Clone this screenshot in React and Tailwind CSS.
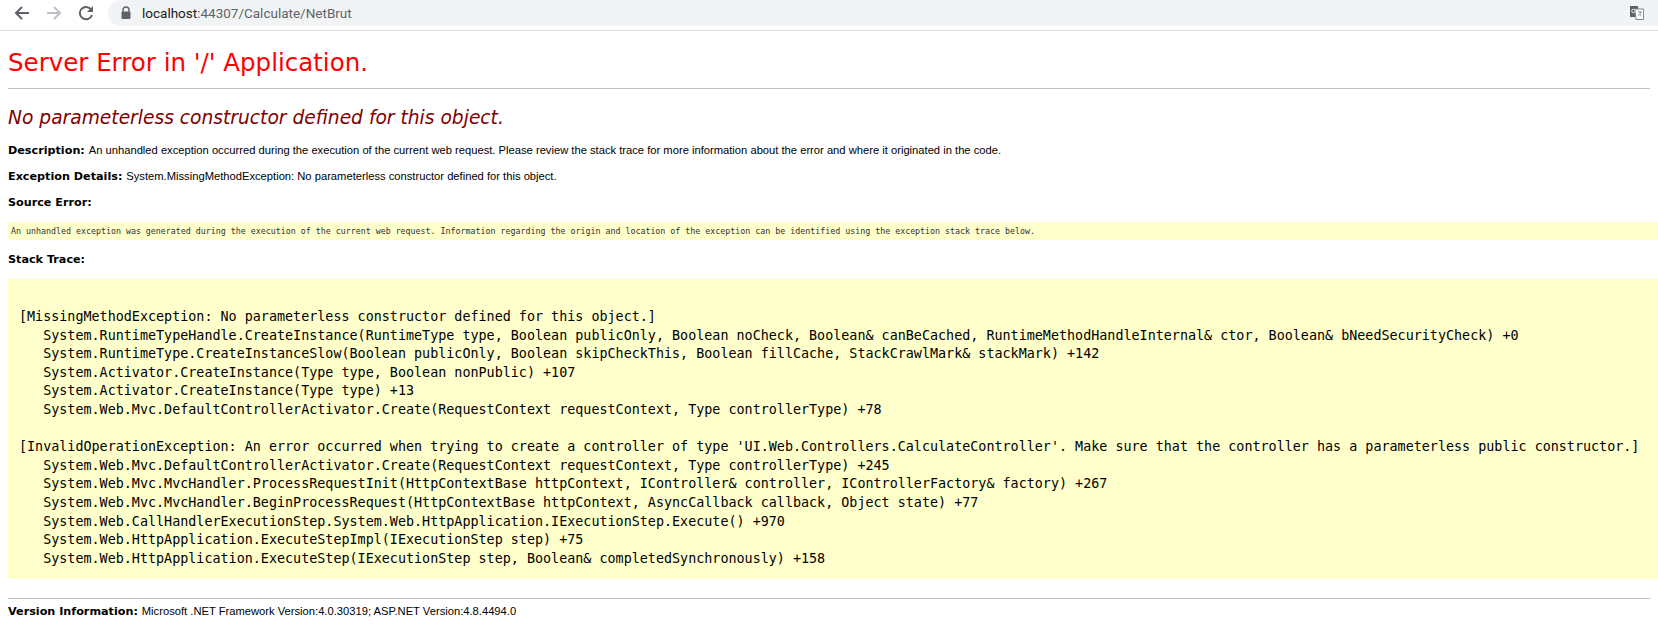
import React from "react";

const verdana = "font-['DejaVu_Sans',Verdana,sans-serif]";
const arial = "font-['Liberation_Sans',Arial,sans-serif]";

const stack = `[MissingMethodException: No parameterless constructor defined for this object.]
   System.RuntimeTypeHandle.CreateInstance(RuntimeType type, Boolean publicOnly, Boolean noCheck, Boolean& canBeCached, RuntimeMethodHandleInternal& ctor, Boolean& bNeedSecurityCheck) +0
   System.RuntimeType.CreateInstanceSlow(Boolean publicOnly, Boolean skipCheckThis, Boolean fillCache, StackCrawlMark& stackMark) +142
   System.Activator.CreateInstance(Type type, Boolean nonPublic) +107
   System.Activator.CreateInstance(Type type) +13
   System.Web.Mvc.DefaultControllerActivator.Create(RequestContext requestContext, Type controllerType) +78

[InvalidOperationException: An error occurred when trying to create a controller of type 'UI.Web.Controllers.CalculateController'. Make sure that the controller has a parameterless public constructor.]
   System.Web.Mvc.DefaultControllerActivator.Create(RequestContext requestContext, Type controllerType) +245
   System.Web.Mvc.MvcHandler.ProcessRequestInit(HttpContextBase httpContext, IController& controller, IControllerFactory& factory) +267
   System.Web.Mvc.MvcHandler.BeginProcessRequest(HttpContextBase httpContext, AsyncCallback callback, Object state) +77
   System.Web.CallHandlerExecutionStep.System.Web.HttpApplication.IExecutionStep.Execute() +970
   System.Web.HttpApplication.ExecuteStepImpl(IExecutionStep step) +75
   System.Web.HttpApplication.ExecuteStep(IExecutionStep step, Boolean& completedSynchronously) +158`;

const Label = ({ children }) => (
  <b className={`${verdana} font-bold text-[11.2px]`}>{children}</b>
);

const Toolbar = () => (
  <div className="h-[31px] flex items-start border-b border-[#dadce0] bg-white">
    <div className="flex items-center h-[26px] pl-[14px] gap-[16px] shrink-0">
      <svg width="16" height="16" viewBox="0 0 16 16" fill="none" stroke="#5f6368" strokeWidth="2">
        <path d="M15 8H2M8 2L2 8l6 6" />
      </svg>
      <svg width="16" height="16" viewBox="0 0 16 16" fill="none" stroke="#bdc1c6" strokeWidth="2">
        <path d="M1 8h13M8 2l6 6-6 6" />
      </svg>
      <svg width="16" height="16" viewBox="0 0 16 16" fill="none">
        <path d="M13.2 4.6A6.2 6.2 0 1 0 14 10" stroke="#5f6368" strokeWidth="2" />
        <path d="M15 1v6H9z" fill="#5f6368" />
      </svg>
    </div>
    <div className="flex-1 h-[26px] ml-[14px] bg-[#f1f3f4] rounded-l-[13px] flex items-center pl-[12px] pr-[14px]">
      <svg width="12" height="14" viewBox="0 0 12 14" className="shrink-0">
        <path d="M3 6V4a3 3 0 0 1 6 0v2" fill="none" stroke="#5f6368" strokeWidth="1.4" />
        <rect x="1.5" y="5.5" width="9" height="7.5" rx="1" fill="#5f6368" />
      </svg>
      <span className="font-['Roboto',sans-serif] ml-[10px] text-[13.5px] text-[#5f6368]">
        <span className="text-[#202124]">localhost</span>:44307/Calculate/NetBrut
      </span>
      <svg width="14" height="14" viewBox="0 0 14 14" className="ml-auto shrink-0">
        <path d="M0 0h8l1 11H0z" fill="#5f6368" />
        <path d="M5 3h8.500v10.500H6z" fill="#fff" stroke="#80868b" />
        <path d="M8 6h4M10 5v1M11 6c-.5 2-1.500 3-3 4M9 7.500c.5 1 1.200 1.800 2.500 2.500" stroke="#80868b" strokeWidth=".8" fill="none" />
        <circle cx="3.500" cy="5" r="1.800" fill="none" stroke="#e8eaed" />
      </svg>
    </div>
  </div>
);

export default function App() {
  return (
    <div className="bg-white text-black min-h-[633px]">
      <Toolbar />
      <div className="px-[8px]">
        <h1 className={`${verdana} text-[24.5px] leading-[28px] font-normal text-[#ff0000] pt-[18px]`}>
          Server Error in '/' Application.
        </h1>
        <hr className="border-0 border-t border-[#c0c0c0] mt-[11px]" />
        <h2 className={`${verdana} italic text-[18.67px] leading-[22px] font-normal text-[#800000] mt-[18px]`}>
          No parameterless constructor defined for this object.
        </h2>
        <p className={`${arial} text-[11.2px] leading-[13px] mt-[15px]`}>
          <Label>Description: </Label>
          An unhandled exception occurred during the execution of the current web request. Please review the stack trace for more information about the error and where it originated in the code.
        </p>
        <p className={`${arial} text-[11.2px] leading-[13px] mt-[13px]`}>
          <Label>Exception Details: </Label>
          System.MissingMethodException: No parameterless constructor defined for this object.
        </p>
        <p className={`${arial} text-[11.2px] leading-[13px] mt-[13px]`}>
          <Label>Source Error:</Label>
        </p>
        <div className="bg-[#ffffcc] mt-[13px] h-[18px] flex items-center pl-[3px] -mr-[8px]">
          <code className="font-['DejaVu_Sans_Mono',monospace] text-[8.3px] text-[#333]">
            An unhandled exception was generated during the execution of the current web request. Information regarding the origin and location of the exception can be identified using the exception stack trace below.
          </code>
        </div>
        <p className={`${arial} text-[11.2px] leading-[13px] mt-[13px]`}>
          <Label>Stack Trace:</Label>
        </p>
        <pre className="bg-[#ffffcc] mt-[13px] -mr-[8px] h-[300px] pl-[11px] pt-[29px] font-['DejaVu_Sans_Mono',monospace] text-[13.4px] leading-[18.6px] text-black">
          {stack}
        </pre>
        <hr className="border-0 border-t border-[#c0c0c0] mt-[19px]" />
        <p className={`${arial} text-[11.2px] leading-[13px] mt-[6px]`}>
          <Label>Version Information: </Label>
          Microsoft .NET Framework Version:4.0.30319; ASP.NET Version:4.8.4494.0
        </p>
      </div>
    </div>
  );
}
